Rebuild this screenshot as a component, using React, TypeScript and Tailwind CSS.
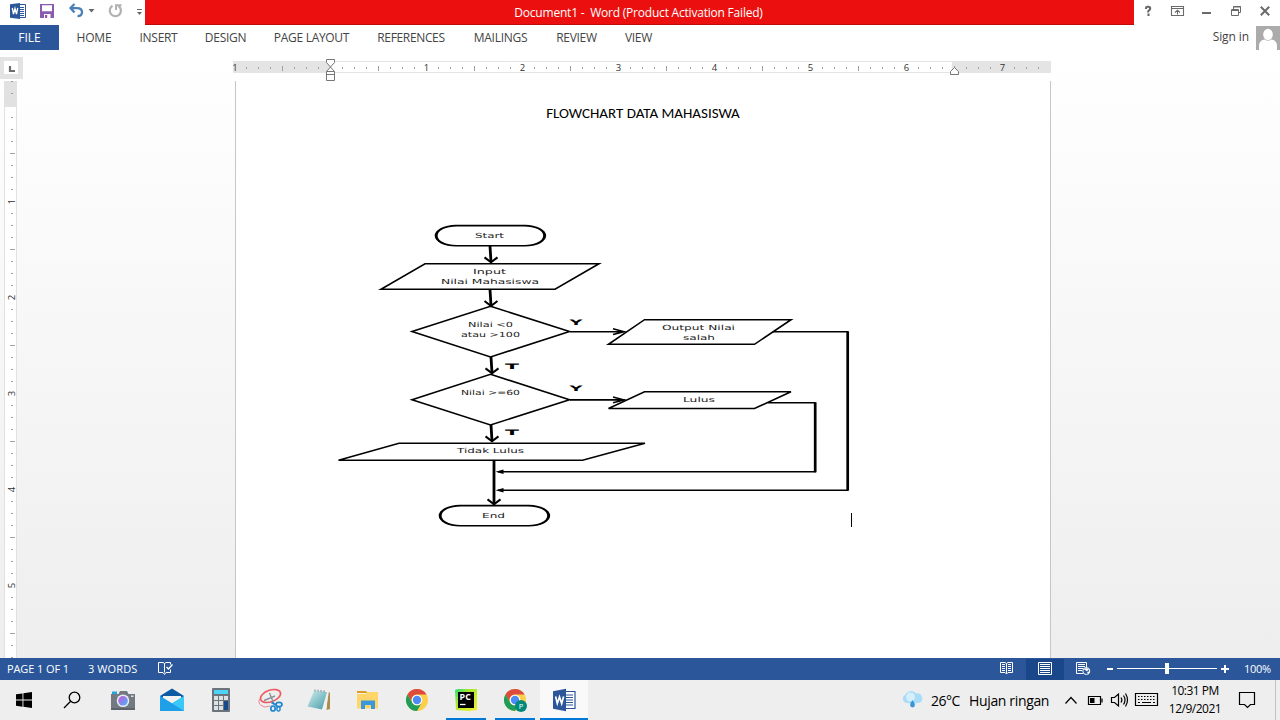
import React from "react";

const tabs = [
  { label: "HOME", cls: "w-16 tracking-[-0.2px]" },
  { label: "INSERT", cls: "w-[65px] tracking-[-0.3px]" },
  { label: "DESIGN", cls: "w-[69px] tracking-[-0.3px]" },
  { label: "PAGE LAYOUT", cls: "w-[103px] tracking-[-0.3px]" },
  { label: "REFERENCES", cls: "w-24 tracking-[-0.35px]" },
  { label: "MAILINGS", cls: "w-[83px] tracking-[-0.25px]" },
  { label: "REVIEW", cls: "w-[69px] tracking-[-0.3px]" },
  { label: "VIEW", cls: "w-[55px] tracking-[-0.3px]" },
];

function WordIcon({ size, className }: { size: number; className?: string }) {
  return (
    <svg width={size} height={size} viewBox="0 0 24 24" className={className}>
      <path d="M12 3.5h11v17H12z" fill="#fff" stroke="#2b579a" strokeWidth="1.2" />
      <path d="M14 7h7M14 9.5h7M14 12h7M14 14.500h7M14 17h7" stroke="#2b579a" strokeWidth="1.2" />
      <path d="M1 3.200L14 .8v22.400L1 20.800z" fill="#2b579a" />
      <path d="M3.600 8.500l1.700 7 2.200-6.600L9.700 15.500l1.900-7" fill="none" stroke="#fff" strokeWidth="1.700" />
    </svg>
  );
}

function TitleBar() {
  return (
    <div className="flex h-[25px] bg-white">
      <div className="flex w-[145px] shrink-0">
        <svg width="145" height="25" viewBox="0 0 145 25">
          <path d="M18 4.500h7.500v13H18z" fill="#fff" stroke="#2b579a" />
          <path d="M19 7.500h5M19 9.500h5M19 11.500h5M19 13.500h5M19 15.500h5" stroke="#2b579a" />
          <path d="M10 4.300L20 3v16l-10-1.300z" fill="#2b579a" />
          <path d="M12.300 8l1.200 6 1.500-5.500L16.500 14l1.200-6" fill="none" stroke="#fff" strokeWidth="1.300" />
          <path d="M40 4h14v14H40z" fill="#8a5bb0" />
          <path d="M42 5.200h10v6H42zM44 14h6.500v4H44z" fill="#fff" />
          <path d="M45 15h2.200v3H45z" fill="#8a5bb0" />
          <path d="M74.500 4l-4 4 4 4.500M70.500 8.200h6.500c4 0 5 2.200 5 4 0 2-1.500 3.900-4.500 3.900" fill="none" stroke="#4a7fb8" strokeWidth="2.300" />
          <path d="M88.500 9h6l-3 3.500z" fill="#666" />
          <path d="M112.500 5.800A5.600 5.600 0 1 0 118.500 6" fill="none" stroke="#b1b1b1" strokeWidth="2.200" />
          <path d="M116 10V5.200h5.500" fill="none" stroke="#b1b1b1" strokeWidth="2" />
          <path d="M137 9.500h5" stroke="#666" />
          <path d="M137 12h5l-2.500 3z" fill="#666" />
        </svg>
      </div>
      <div className="flex w-[989px] shrink-0 items-center justify-center border-b border-[#c00a0a] bg-[#eb100f] pr-[2px] pt-[2px] text-[12px] text-white">
        <span className="whitespace-pre tracking-[-0.21px]">Document1 -  Word (Product Activation Failed)</span>
      </div>
      <svg width="146" height="25" viewBox="1134 0 146 25" fill="none" stroke="#6a6a6a">
        <path d="M1146 9V8q0-1.200 1.500-1.200h1q1.700 0 1.700 1.500 0 1.300-1.200 2-1 .6-1 2.200M1148.500 13.500v2.500" strokeWidth="2.100" />
        <path d="M1171.500 6.500h12v9h-12zM1171.500 8.500h12M1177.500 14.500v-4M1175 12.500l2.500-2.300 2.500 2.300" strokeWidth="1.100" />
        <path d="M1202 13h9" strokeWidth="2" />
        <path d="M1231.500 9.500h7v6h-7zM1231 10.500h8M1233.500 9V6.500h7v6h-2M1233 7h8" />
        <path d="M1260.800 6.800l8.400 8.400M1269.200 6.800l-8.400 8.400" strokeWidth="2" />
      </svg>
    </div>
  );
}

function TabBar() {
  return (
    <div className="flex h-[25px] bg-white text-[12px] text-[#444]">
      <div className="mr-[3px] flex w-[59px] items-center justify-center bg-[#2b579a] text-white">FILE</div>
      {tabs.map((t) => (
        <div key={t.label} className={"flex items-center justify-center whitespace-nowrap " + t.cls}>
          {t.label}
        </div>
      ))}
      <div className="ml-auto flex items-center gap-[7px]">
        <span className="pb-px tracking-[-0.1px]">Sign in</span>
        <svg width="24" height="24" viewBox="0 0 24 24">
          <path d="M0 0h24v24H0z" fill="#ababab" />
          <ellipse cx="12" cy="8.500" rx="4.800" ry="5.700" fill="#fff" />
          <path d="M3 24v-4q0-6 6-6.500 3 2.500 6 0 6 .5 6 6.500v4z" fill="#fff" />
        </svg>
      </div>
    </div>
  );
}

function TopRuler() {
  const ticks = Array.from({ length: 67 }, (_, i) => i + 1).filter((i) => i % 8 !== 0);
  return (
    <div className="flex h-[31px]">
      <svg width="232" height="31" viewBox="0 50 232 31">
        <path d="M0 57h23v22H0z" fill="#e3e3e3" />
        <path d="M4 61h14v13H4z" fill="#fff" />
        <path d="M10 66v5h5" fill="none" stroke="#6d6d6d" strokeWidth="2.200" />
      </svg>
      <svg width="821" height="31" viewBox="232 50 821 31">
        <path d="M233 61h818v12H233z" fill="#e4e4e4" />
        <path d="M330 62h622v10H330z" fill="#fff" />
        {ticks.map((i) => {
          const x = 234.5 + i * 12;
          return i % 4 === 0 ? (
            <path key={i} d={`M${x} 66v5`} stroke="#a0a0a0" />
          ) : (
            <path key={i} d={`M${x} 67v2`} stroke="#a0a0a0" />
          );
        })}
        <g fill="#333" fontSize="9.5" fontFamily="Open Sans" textAnchor="middle">
          {[1, 0, 1, 2, 3, 4, 5, 6, 7].map((n, i) =>
            i === 1 ? null : (
              <text key={i} x={i === 0 ? 235 : 234.5 + i * 96} y="71">
                {n}
              </text>
            ),
          )}
        </g>
        <path d="M326.500 59.500h8v3l-4 4.500 4 4.500v9h-8v-9l4-4.500-4-4.500zM326.500 74.500h8M326.500 71.500h8" fill="#fff" stroke="#777" />
        <path d="M950.500 74.500v-3l4-4 4 4v3z" fill="#fff" stroke="#777" />
      </svg>
    </div>
  );
}

function SideRuler() {
  const ticks = Array.from({ length: 46 }, (_, i) => i + 1);
  return (
    <svg width="235" height="577" viewBox="0 81 235 577" className="shrink-0">
      <path d="M4 81h13v577H4z" fill="#e1e1e1" />
      <path d="M5 107h11v551H5z" fill="#fff" />
      <path d="M11 81.500h2M11 93.500h2" stroke="#a0a0a0" />
      {ticks.map((i) => {
        const y = 105.5 + i * 12;
        if (i % 8 === 0) {
          return (
            <text key={i} transform={`translate(15 ${y}) rotate(-90)`} fontSize="9.5" fontFamily="Open Sans" fill="#333" textAnchor="middle">
              {i / 8}
            </text>
          );
        }
        return i % 4 === 0 ? (
          <path key={i} d={`M10 ${y}h5`} stroke="#a0a0a0" />
        ) : (
          <path key={i} d={`M11 ${y}h2`} stroke="#a0a0a0" />
        );
      })}
    </svg>
  );
}

function Label({ x, y, w, children }: { x: number; y: number; w: number; children: string }) {
  return (
    <text x={x} y={y} textLength={w} lengthAdjust="spacingAndGlyphs">
      {children}
    </text>
  );
}

function Terminator({ x, y }: { x: number; y: number }) {
  return (
    <g stroke="none">
      <rect x={x} y={y} width="111.400" height="21.800" rx="21" ry="10.900" fill="#000" />
      <rect x={x + 2.9} y={y + 1.6} width="105.600" height="18.600" rx="19" ry="9.300" fill="#fff" />
    </g>
  );
}

function Flowchart() {
  return (
    <svg width="540" height="320" viewBox="325 215 540 320" className="ml-[89px] mt-[12px]" fill="none" stroke="#000">
      <Terminator x={434.7} y={224.8} />
      <Terminator x={438.7} y={504.8} />
      <g strokeWidth="1.600">
        <path d="M425 263.700h174l-44 25.600H381z" />
        <path d="M490.500 306.300L569.500 331.500 490.500 357 412 331.500z" />
        <path d="M490.500 374.300L569.500 399.700 490.500 425 412 399.700z" />
        <path d="M644.500 319.700H791l-36.500 24.600H608.500z" />
        <path d="M644.500 391.700H791l-36.500 16.800H608.500z" />
        <path d="M399 443.200H645L582.500 460.200H338.500z" />
        <path d="M570 331.700h55M613 328.800l11 2.900-11 2.900M570 399.900h55M613 397l11 2.900-11 2.900" />
        <path d="M773 331.700h75M768 402.700h47.500M498 471.700h318M498 490.300h350" />
      </g>
      <path d="M847.700 331.300v159.500M815.200 402.300v70" strokeWidth="2.700" />
      <path d="M490 246l1 16M490 289.500l1 16M491 357l1 16M491 425l1 16M494 460.500v44" strokeWidth="2.800" />
      <path d="M484.500 257.300l6.500 5 6.500-5M484.500 301l6.500 5 6.500-5M485.500 368.300l6.500 5 6.500-5M485.500 436.300l6.500 5 6.500-5M487.500 499.300l6.500 5 6.500-5" strokeWidth="2.100" />
      <path d="M495.500 471.700l8-2.200v4.400zM495.500 490.300l8-2.200v4.400z" fill="#000" stroke="none" />
      <g fill="#1a1a1a" stroke="none" fontSize="7" fontFamily="DejaVu Sans, sans-serif">
        <Label x={475} y={237.8} w={29}>Start</Label>
        <Label x={473} y={273.700} w={33}>Input</Label>
        <Label x={441} y={283.700} w={98}>Nilai Mahasiswa</Label>
        <Label x={468} y={327.200} w={45}>Nilai &lt;0</Label>
        <Label x={461} y={337.200} w={59}>atau &gt;100</Label>
        <Label x={461} y={395.200} w={59}>Nilai &gt;=60</Label>
        <Label x={662} y={329.700} w={73}>Output Nilai</Label>
        <Label x={683} y={339.700} w={32}>salah</Label>
        <Label x={683} y={401.700} w={32}>Lulus</Label>
        <Label x={457} y={452.700} w={67}>Tidak Lulus</Label>
        <Label x={482} y={517.700} w={23}>End</Label>
      </g>
      <g fill="#000" stroke="none" fontSize="7.400" fontWeight="bold" fontFamily="DejaVu Sans, sans-serif">
        <Label x={569.5} y={325.200} w={13}>Y</Label>
        <Label x={569.5} y={390.700} w={13}>Y</Label>
        <Label x={505} y={369.200} w={14}>T</Label>
        <Label x={505} y={434.700} w={14}>T</Label>
      </g>
      <path d="M851.500 513v14" strokeWidth="1" />
    </svg>
  );
}

function StatusBar() {
  return (
    <div className="flex h-[22px] items-center bg-[#2b579a] text-[11px] text-white">
      <span className="ml-[7px] w-[81px] tracking-[-0.1px]">PAGE 1 OF 1</span>
      <span className="w-[69px] tracking-[0.1px]">3 WORDS</span>
      <svg width="16" height="22" viewBox="157 658 16 22" fill="none" stroke="#fff">
        <path d="M164.500 672.500v-9l-1.500-1h-4.500v10h4.500l1.500 2 1.500-2h4.500v-3M164.500 663.500l1.500-1h4.500v2" />
        <path d="M166.500 667l2 2 4-4.500" strokeWidth="1.300" />
      </svg>
      <svg width="240" height="22" viewBox="990 658 240 22" className="ml-auto" fill="none" stroke="#fff">
        <path d="M1000.500 662.500h4.500l1.500 1 1.500-1h4.500v10h-4.500l-1.500 1.500-1.500-1.500h-4.500zM1006.500 663.500v10M1002 664.500h3M1002 666.500h3M1002 668.500h3M1002 670.500h3M1008 664.500h3M1008 666.500h3M1008 668.500h3M1008 670.500h3" />
        <path d="M1026 659h38v21h-38z" fill="#19478a" stroke="none" />
        <path d="M1038.500 662.500h13v12h-13zM1040 664.500h10M1040 666.500h10M1040 668.500h10M1040 670.500h10M1040 672.500h10" />
        <path d="M1083 673.500h-6.500v-11h10v5M1078 664.500h7M1078 666.500h7M1078 668.500h5M1078 670.500h4" />
        <circle cx="1086.300" cy="671" r="3.500" fill="#2b579a" />
        <path d="M1083.500 669l3.500-1 2 1.800-2.200 1.500-1.300-1zM1087 672l3-.8-1.700 3z" fill="#fff" stroke="none" />
        <path d="M1107 669h6M1221 669h8M1225 665v8" strokeWidth="2" />
        <path d="M1117 668.500h100" />
        <path d="M1165 663h4v11h-4z" fill="#fff" stroke="none" />
      </svg>
      <span className="ml-[14px] w-9 whitespace-nowrap tracking-[-0.3px]">100%</span>
    </div>
  );
}

function Chrome({ badge }: { badge?: boolean }) {
  return (
    <svg width="24" height="24" viewBox="0 0 24 24" className="overflow-visible">
      <circle cx="12" cy="12" r="11" fill="#fdcf48" />
      <path d="M2.470 6.500A11 11 0 0 1 21.530 6.500H12A5.500 5.500 0 0 0 7.240 14.750z" fill="#dc4b3e" />
      <path d="M2.470 6.500A11 11 0 0 0 12 23L16.760 14.750A5.500 5.500 0 0 1 7.240 14.750z" fill="#1e9e5a" />
      <circle cx="12" cy="12" r="5.300" fill="#fff" />
      <circle cx="12" cy="12" r="4.200" fill="#4c8bf5" />
      {badge && (
        <>
          <circle cx="18" cy="18" r="6" fill="#00897b" />
          <text x="18" y="20.700" fontSize="7.500" fill="#fff" textAnchor="middle" fontFamily="Open Sans">
            P
          </text>
        </>
      )}
    </svg>
  );
}

function AppButton({ children, cls = "" }: { children: React.ReactNode; cls?: string }) {
  return <div className={"flex h-10 w-12 shrink-0 items-center justify-center " + cls}>{children}</div>;
}

function Taskbar() {
  return (
    <div className="flex h-10 bg-[#eee] text-black">
      <div className="flex gap-px pl-px">
        <AppButton cls="pr-[2px]">
          <svg width="16" height="16" viewBox="0 0 16 16">
            <path d="M0 2.300L6.500 1.400V7.600H0zM7.400 1.300L16 0V7.600H7.400zM0 8.500h6.500v6.200L0 13.800zM7.400 8.500H16V16l-8.600-1.200z" />
          </svg>
        </AppButton>
        <AppButton cls="pr-[4px]">
          <svg width="18" height="18" viewBox="0 0 18 18" fill="none" stroke="#000" strokeWidth="1.300">
            <circle cx="11.500" cy="6.500" r="5.300" />
            <path d="M7.600 10.300L1 17" />
          </svg>
        </AppButton>
        <AppButton>
          <svg width="26" height="24" viewBox="0 0 26 24">
            <defs>
              <linearGradient id="lens" x1="0" y1="0" x2="1" y2="1">
                <stop offset="0.100" stopColor="#c05be0" />
                <stop offset="1" stopColor="#42b8f5" />
              </linearGradient>
            </defs>
            <path d="M2 3.500h5v3H2z" fill="#27a3e0" />
            <path d="M1 6h7.500l1.500-3h7l1.500 3H25v16H1z" fill="#737980" />
            <path d="M1 20h24v2H1z" fill="#5d646c" />
            <circle cx="13" cy="12.800" r="6.300" fill="#e9edf2" />
            <circle cx="13" cy="12.800" r="4.800" fill="url(#lens)" />
            <path d="M21 7.500h2.500v1.500H21z" fill="#ddd" />
          </svg>
        </AppButton>
        <AppButton>
          <svg width="24" height="24" viewBox="0 0 24 24">
            <path d="M0 8L12 .5 24 8v5H0z" fill="#0c59a4" />
            <path d="M3 8h18v5l-9 5-9-5z" fill="#f2f2f2" />
            <path d="M0 8l12 7.500L24 8v15H0z" fill="#28b8f2" />
            <path d="M0 23L13 14.800 24 8v15z" fill="#39c8f8" />
            <path d="M0 8l12 7.500L24 23H0z" fill="#1e9fe8" />
          </svg>
        </AppButton>
        <AppButton>
          <svg width="18" height="24" viewBox="0 0 18 24">
            <rect width="18" height="24" rx="1" fill="#6b737b" />
            <path d="M2 2h14v4H2z" fill="#4dd2f8" />
            <path d="M2 8h4v4H2zM7 8h4v4H7zM12 8h4v4h-4zM2 13h4v4H2zM7 13h4v4H7zM2 18h4v4H2zM7 18h4v4H7z" fill="#dde1e4" />
            <path d="M12 13h4v9h-4z" fill="#164a8c" />
          </svg>
        </AppButton>
        <AppButton>
          <svg width="26" height="26" viewBox="0 0 26 26" fill="none">
            <ellipse cx="13.500" cy="9" rx="10.500" ry="5.800" stroke="#ee5a60" strokeWidth="1.600" transform="rotate(-20 13.500 9)" />
            <path d="M2.500 12Q0 18 8 20l5-1" stroke="#f0898d" />
            <path d="M12.500 6l4.500 11M18 9L7 13.500" stroke="#8b929a" strokeWidth="1.400" />
            <ellipse cx="22" cy="17.500" rx="3" ry="2.100" stroke="#2086cf" strokeWidth="1.700" />
            <ellipse cx="16" cy="21.500" rx="2.200" ry="2.500" stroke="#2086cf" strokeWidth="1.700" />
            <ellipse cx="21.500" cy="21.800" rx="1.600" ry="2.300" stroke="#2086cf" strokeWidth="1.400" />
            <path d="M14.500 15.500l4.500 2.500" stroke="#2086cf" strokeWidth="2" />
          </svg>
        </AppButton>
        <AppButton>
          <svg width="24" height="24" viewBox="0 0 24 24">
            <defs>
              <linearGradient id="note" x1="0" y1="0" x2="1" y2="1">
                <stop offset="0" stopColor="#cdeef0" />
                <stop offset="1" stopColor="#499aa8" />
              </linearGradient>
            </defs>
            <path d="M21 3l2 2v16l-3.500 1z" fill="#ad8b4c" />
            <path d="M8 2l14 1-3 19-10-1z" fill="#eef1f2" />
            <path d="M7 3l13 1-5 17.500L.5 18.500z" fill="url(#note)" />
            <path d="M8 1.500v2M11 1.700v2M14 2v2M17 2.300v2" stroke="#74878c" />
          </svg>
        </AppButton>
        <AppButton cls="pr-px">
          <svg width="22" height="20" viewBox="0 0 22 20">
            <path d="M0 1h9l1.500 2H0z" fill="#dd9b1c" />
            <path d="M0 4h9l1.500-2H21v16.500H0z" fill="#ffd667" />
            <path d="M4 10.500h14V19h-4v-4H8v4H4z" fill="#3b97dc" />
          </svg>
        </AppButton>
        <AppButton>
          <Chrome />
        </AppButton>
        <AppButton cls="relative">
          <svg width="22" height="22" viewBox="0 0 22 22">
            <defs>
              <linearGradient id="py" x1="0" y1="0" x2="1" y2="1">
                <stop offset="0" stopColor="#20dc80" />
                <stop offset=".35" stopColor="#a8e82a" />
                <stop offset="1" stopColor="#f4f22c" />
              </linearGradient>
            </defs>
            <path d="M0 1l3-1h19v21l-8 1-13-1z" fill="url(#py)" />
            <path d="M3 3h16v16H3z" />
            <path d="M5 15.500h5.500" stroke="#fff" strokeWidth="1.300" />
            <text x="4.600" y="11.300" fontSize="8.500" fontWeight="bold" fill="#fff" fontFamily="Open Sans" textLength="11.200" lengthAdjust="spacingAndGlyphs">
              PC
            </text>
          </svg>
          <div className="absolute bottom-0 left-1 h-[2px] w-10 bg-[#0078d7]" />
        </AppButton>
        <AppButton cls="relative">
          <Chrome badge />
          <div className="absolute bottom-0 left-1 h-[2px] w-10 bg-[#0078d7]" />
        </AppButton>
        <AppButton cls="relative bg-[#f9f9f9]">
          <WordIcon size={24} />
          <div className="absolute bottom-0 left-0 h-[2px] w-12 bg-[#0078d7]" />
        </AppButton>
      </div>
      <div className="ml-auto flex items-center">
        <svg width="22" height="18" viewBox="0 0 22 18">
          <path d="M5 12a4.300 4.300 0 0 1-2-8 6.500 6.500 0 0 1 11-1.500 5 5 0 0 1 4 9q-7 1.500-13 .5z" fill="#a9dcf8" />
          <circle cx="8.500" cy="6" r="4.500" fill="#d6effc" />
          <path d="M10.500 9q-2.400 3-2.400 5a2.400 2.400 0 0 0 4.800 0q0-2-2.400-5z" fill="#3795dc" />
        </svg>
        <span className="ml-[7px] w-[38px] whitespace-nowrap text-[14px] tracking-[-0.5px]">26°C</span>
        <span className="w-[94px] whitespace-nowrap text-[14px] tracking-[-0.35px]">Hujan ringan</span>
        <svg width="96" height="40" viewBox="1063 680 96 40" fill="none" stroke="#000" strokeWidth="1.200">
          <path d="M1065.500 703.500l5.500-6 5.500 6" />
          <path d="M1088.500 696.500h12v8h-12zM1102 698.500v4" />
          <path d="M1090 698h4.500v5H1090z" fill="#000" stroke="none" />
          <path d="M1111.500 697.500h3l4-3.500v12l-4-3.500h-3zM1121 697.500q1.700 2.500 0 5M1123.500 695.500q3 4.500 0 9M1125.500 693.500q4 6.500 0 13" />
          <path d="M1135.500 693.500h22v12h-22z" />
          <path d="M1138 696.500h18M1138 699.500h18" strokeDasharray="1.500 1.500" />
          <path d="M1138 702.500h2M1142 702.500h9M1153 702.500h2" />
        </svg>
        <div className="flex w-[63px] flex-col items-center pl-[9px] text-[12px] leading-[18px] tracking-[-0.5px]">
          <span className="whitespace-nowrap">10:31 PM</span>
          <span className="whitespace-nowrap">12/9/2021</span>
        </div>
        <svg width="58" height="40" viewBox="1222 680 58 40" fill="none" stroke="#000" strokeWidth="1.200">
          <path d="M1239.500 692.500h15v12h-4l-3 3-3-3h-5z" />
          <path d="M1275.500 680v40" stroke="#c4c4c4" strokeWidth="1" />
        </svg>
      </div>
    </div>
  );
}

export default function App() {
  return (
    <div className="flex h-[720px] w-[1280px] flex-col overflow-hidden bg-white font-['Open_Sans','Noto_Sans',sans-serif]">
      <TitleBar />
      <TabBar />
      <div className="flex h-[608px] flex-col bg-linear-to-b from-white to-[#eeeeee]">
        <TopRuler />
        <div className="flex h-[577px]">
          <SideRuler />
          <div className="flex w-[816px] flex-col border-x border-[#c6c6c6] bg-white">
            <h1 className="mt-[22px] text-center font-[Carlito,Lato,sans-serif] text-[15px] leading-[20px] text-black">
              FLOWCHART DATA MAHASISWA
            </h1>
            <div className="mt-[80px] flex">
              <Flowchart />
            </div>
          </div>
        </div>
      </div>
      <StatusBar />
      <Taskbar />
    </div>
  );
}
